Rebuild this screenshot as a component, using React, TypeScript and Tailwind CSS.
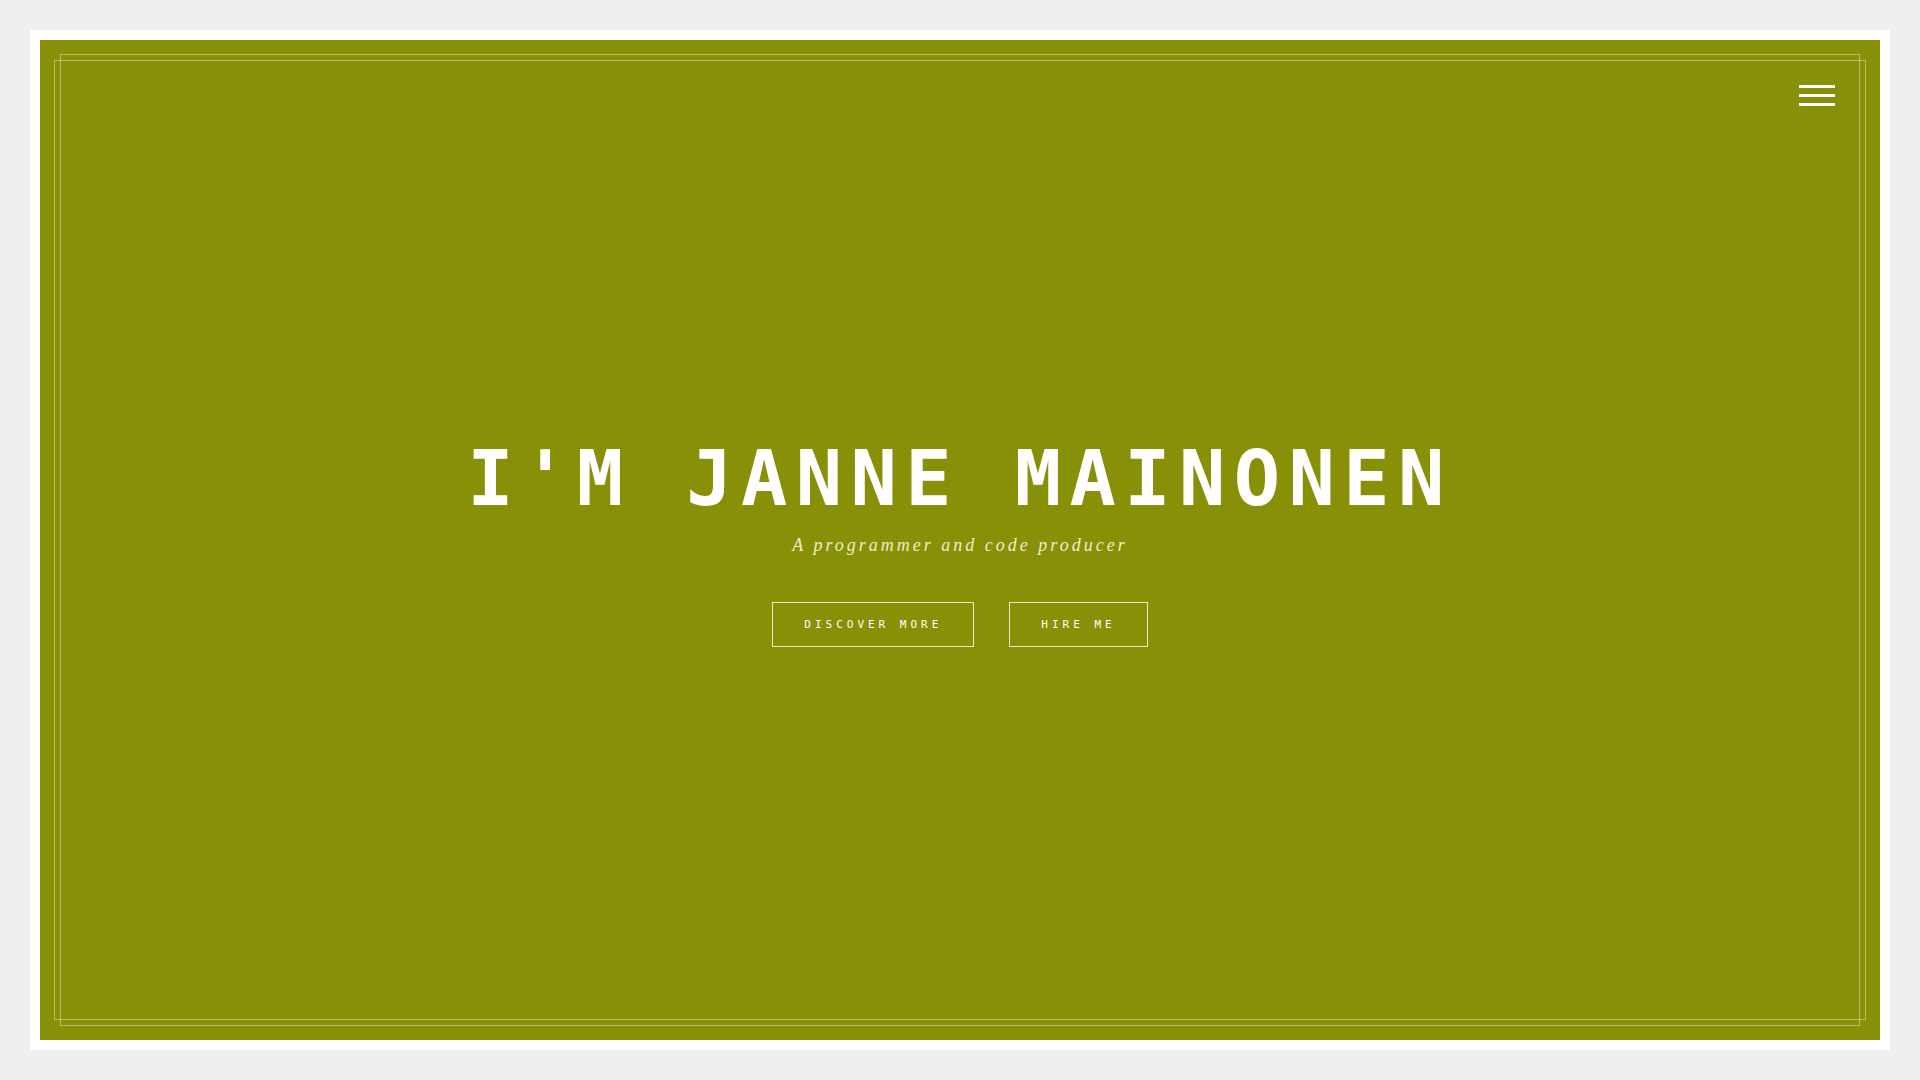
const Hamburger = () => {
  return (
    <button className="absolute top-[45px] right-[45px] flex flex-col gap-[6px]" aria-label="Menu">
      <span className="block w-[36px] h-[3px] bg-white" />
      <span className="block w-[36px] h-[3px] bg-white" />
      <span className="block w-[36px] h-[3px] bg-white" />
    </button>
  );
};

const Hero = () => {
  return (
    <div className="flex flex-col items-center justify-center h-full pt-[7px]">
      <h1 className="font-['DejaVu_Sans_Mono',monospace] font-bold text-[77px] leading-none tracking-[8.4px] text-white">
        I'M JANNE MAINONEN
      </h1>

      <p className="mt-[14px] font-['Liberation_Serif',serif] italic text-[18px] leading-[28px] tracking-[3px] text-[#eceec9]">
        A programmer and code producer
      </p>

      <div className="flex gap-[35px] mt-[43px]">
        <a className="h-[45px] flex items-center pt-[2px] px-[31px] border border-white/80 font-['DejaVu_Sans_Mono',monospace] text-[11px] tracking-[4px] text-white">
          DISCOVER MORE
        </a>
        <a className="h-[45px] flex items-center pt-[2px] px-[31px] border border-white/80 font-['DejaVu_Sans_Mono',monospace] text-[11px] tracking-[4px] text-white">
          HIRE ME
        </a>
      </div>
    </div>
  );
};

const App = () => {
  return (
    <div className="min-h-screen bg-[#efefef] p-[30px]">
      <div className="h-[1020px] bg-white p-[10px]">
        <main className="relative h-full bg-[#879006] overflow-hidden">
          {/* double frame lines */}
          <div className="absolute top-[14px] bottom-[14px] left-[20px] right-[20px] border border-white/40 pointer-events-none" />
          <div className="absolute top-[20px] bottom-[20px] left-[14px] right-[14px] border border-white/40 pointer-events-none" />

          <Hamburger />
          <Hero />
        </main>
      </div>
    </div>
  );
};

export default App;
